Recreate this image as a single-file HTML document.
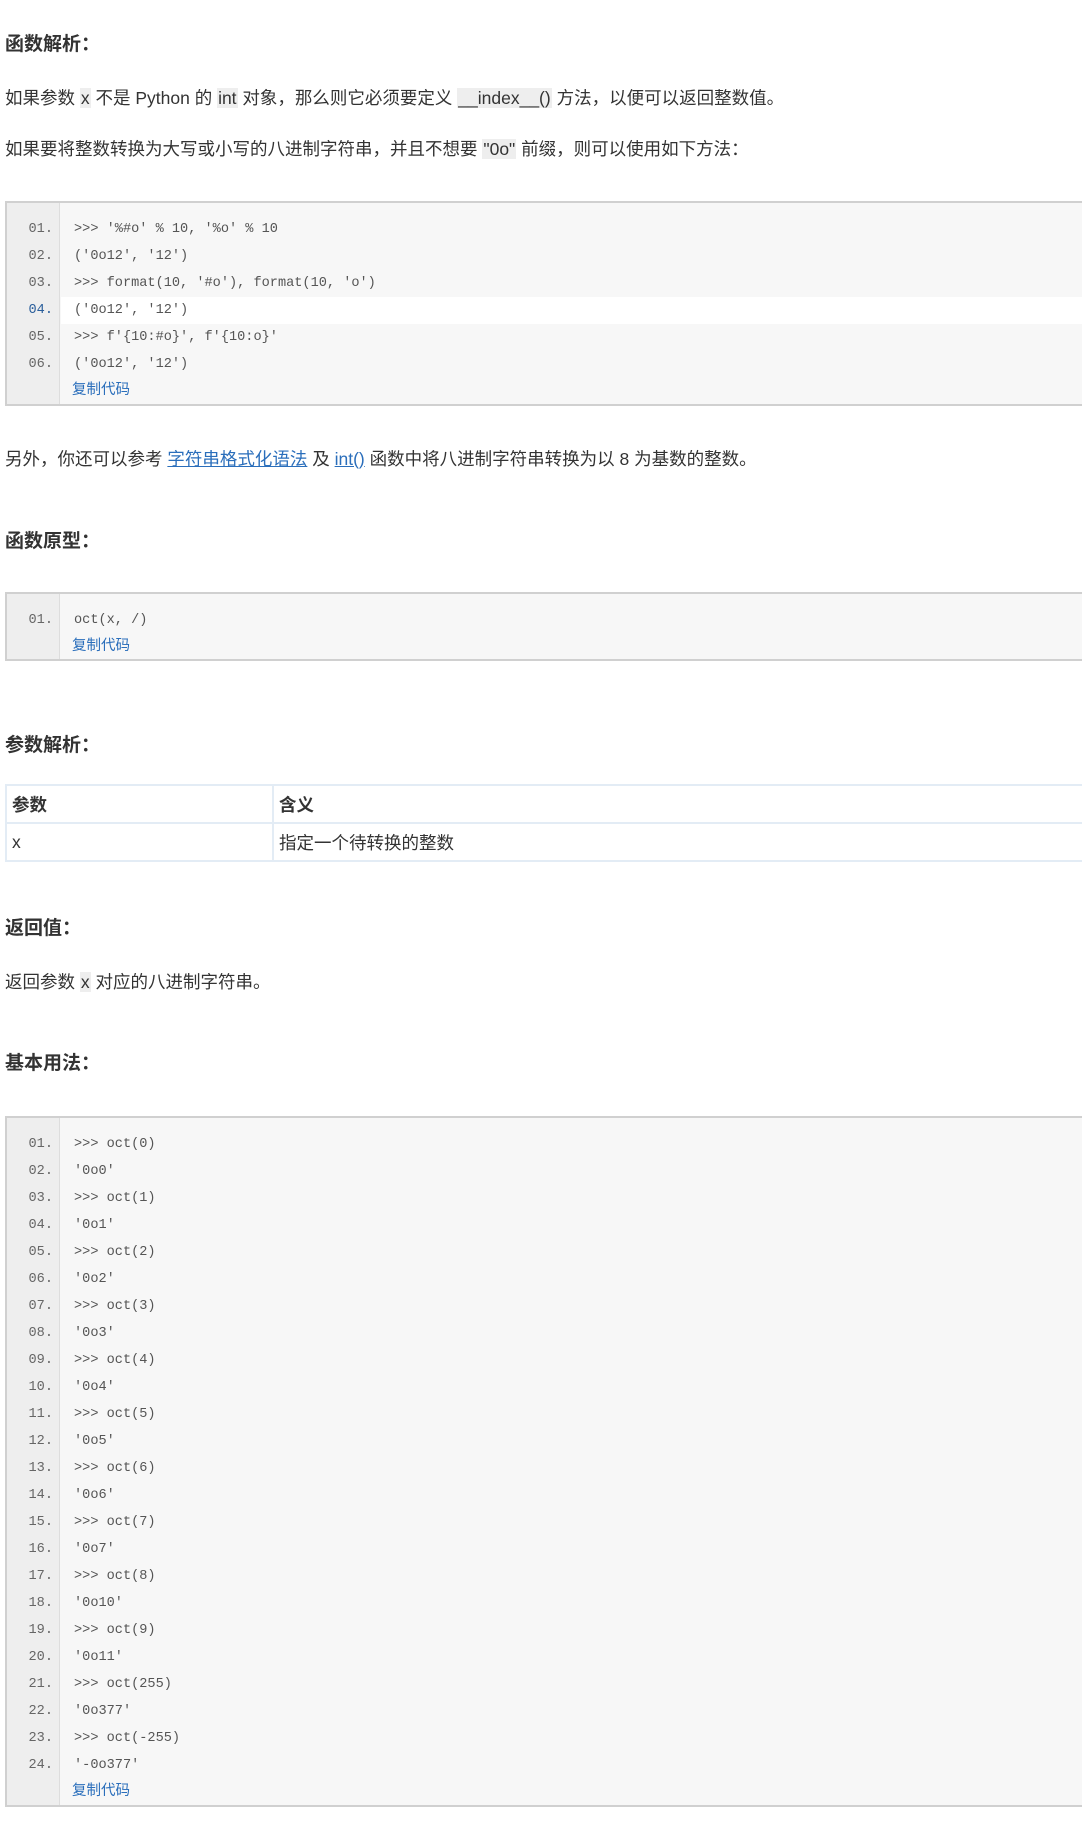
<!DOCTYPE html>
<html><head><meta charset="utf-8"><style>
*{margin:0;padding:0;box-sizing:border-box}
body{width:1082px;height:1833px;background:#fff;position:relative;overflow:hidden;font-family:"Liberation Sans","Noto Sans CJK SC",sans-serif;color:#333;}
.a{position:absolute;left:5px;white-space:nowrap}
.h{font-size:19px;font-weight:bold;line-height:26px;color:#333}
.p{font-size:17.5px;line-height:26px}
.p code{font-family:inherit;background:#eee;padding:0 1px}
.p a{color:#2a6ebb;text-decoration:underline}
.box{position:absolute;left:5px;width:1090px;background:#f7f7f7;border:2px solid #d0d0d0;border-right:none}
.g{position:absolute;left:0;top:0;bottom:0;width:53px;background:#eee;border-right:1px solid #ddd}
.ln{position:relative;height:27px;line-height:27px;font-family:"Liberation Mono",monospace;font-size:13.6px;color:#555}
.ln .n{position:absolute;left:0;width:46px;text-align:right;color:#666}
.ln .c{position:absolute;left:67px;white-space:pre}
.ln.hl::after{content:"";position:absolute;left:54px;right:0;top:0;bottom:0;background:#fff;z-index:0}
.ln.hl .c,.ln.hl .n{z-index:1}
.ln.hl .n{color:#2a5e9b}
.cp{position:relative;margin-left:65px;font-size:14.5px;line-height:24px;color:#2a6ebb}
table{position:absolute;left:5px;top:784px;width:1090px;border-collapse:collapse;font-size:17.5px}
td,th{border:2px solid #e3ecf5;height:38px;padding:0 5px;text-align:left}
th{font-weight:bold}
</style></head><body>
<div class="a h" style="top:32px">函数解析：</div>
<div class="a p" style="top:85px">如果参数 <code>x</code> 不是 Python 的 <code>int</code> 对象，那么则它必须要定义 <code>__index__()</code> 方法，以便可以返回整数值。</div>
<div class="a p" style="top:136px">如果要将整数转换为大写或小写的八进制字符串，并且不想要 <code>"0o"</code> 前缀，则可以使用如下方法：</div>

<div class="box" style="top:201px;height:205px;padding-top:13px">
<div class="g"></div>
<div class="ln"><span class="n">01.</span><span class="c">&gt;&gt;&gt; '%#o' % 10, '%o' % 10</span></div>
<div class="ln"><span class="n">02.</span><span class="c">('0o12', '12')</span></div>
<div class="ln"><span class="n">03.</span><span class="c">&gt;&gt;&gt; format(10, '#o'), format(10, 'o')</span></div>
<div class="ln hl"><span class="n">04.</span><span class="c">('0o12', '12')</span></div>
<div class="ln"><span class="n">05.</span><span class="c">&gt;&gt;&gt; f'{10:#o}', f'{10:o}'</span></div>
<div class="ln"><span class="n">06.</span><span class="c">('0o12', '12')</span></div>
<div class="cp">复制代码</div>
</div>

<div class="a p" style="top:446px">另外，你还可以参考 <a>字符串格式化语法</a> 及 <a>int()</a> 函数中将八进制字符串转换为以 8 为基数的整数。</div>
<div class="a h" style="top:529px">函数原型：</div>

<div class="box" style="top:592px;height:69px;padding-top:13px">
<div class="g"></div>
<div class="ln"><span class="n">01.</span><span class="c">oct(x, /)</span></div>
<div class="cp">复制代码</div>
</div>

<div class="a h" style="top:733px">参数解析：</div>
<table>
<tr><th style="width:267px">参数</th><th>含义</th></tr>
<tr><td>x</td><td>指定一个待转换的整数</td></tr>
</table>

<div class="a h" style="top:916px">返回值：</div>
<div class="a p" style="top:969px">返回参数 <code>x</code> 对应的八进制字符串。</div>
<div class="a h" style="top:1051px">基本用法：</div>

<div class="box" style="top:1116px;height:691px;padding-top:13px">
<div class="g"></div>
<div class="ln"><span class="n">01.</span><span class="c">&gt;&gt;&gt; oct(0)</span></div>
<div class="ln"><span class="n">02.</span><span class="c">'0o0'</span></div>
<div class="ln"><span class="n">03.</span><span class="c">&gt;&gt;&gt; oct(1)</span></div>
<div class="ln"><span class="n">04.</span><span class="c">'0o1'</span></div>
<div class="ln"><span class="n">05.</span><span class="c">&gt;&gt;&gt; oct(2)</span></div>
<div class="ln"><span class="n">06.</span><span class="c">'0o2'</span></div>
<div class="ln"><span class="n">07.</span><span class="c">&gt;&gt;&gt; oct(3)</span></div>
<div class="ln"><span class="n">08.</span><span class="c">'0o3'</span></div>
<div class="ln"><span class="n">09.</span><span class="c">&gt;&gt;&gt; oct(4)</span></div>
<div class="ln"><span class="n">10.</span><span class="c">'0o4'</span></div>
<div class="ln"><span class="n">11.</span><span class="c">&gt;&gt;&gt; oct(5)</span></div>
<div class="ln"><span class="n">12.</span><span class="c">'0o5'</span></div>
<div class="ln"><span class="n">13.</span><span class="c">&gt;&gt;&gt; oct(6)</span></div>
<div class="ln"><span class="n">14.</span><span class="c">'0o6'</span></div>
<div class="ln"><span class="n">15.</span><span class="c">&gt;&gt;&gt; oct(7)</span></div>
<div class="ln"><span class="n">16.</span><span class="c">'0o7'</span></div>
<div class="ln"><span class="n">17.</span><span class="c">&gt;&gt;&gt; oct(8)</span></div>
<div class="ln"><span class="n">18.</span><span class="c">'0o10'</span></div>
<div class="ln"><span class="n">19.</span><span class="c">&gt;&gt;&gt; oct(9)</span></div>
<div class="ln"><span class="n">20.</span><span class="c">'0o11'</span></div>
<div class="ln"><span class="n">21.</span><span class="c">&gt;&gt;&gt; oct(255)</span></div>
<div class="ln"><span class="n">22.</span><span class="c">'0o377'</span></div>
<div class="ln"><span class="n">23.</span><span class="c">&gt;&gt;&gt; oct(-255)</span></div>
<div class="ln"><span class="n">24.</span><span class="c">'-0o377'</span></div>
<div class="cp">复制代码</div>
</div>
</body></html>
